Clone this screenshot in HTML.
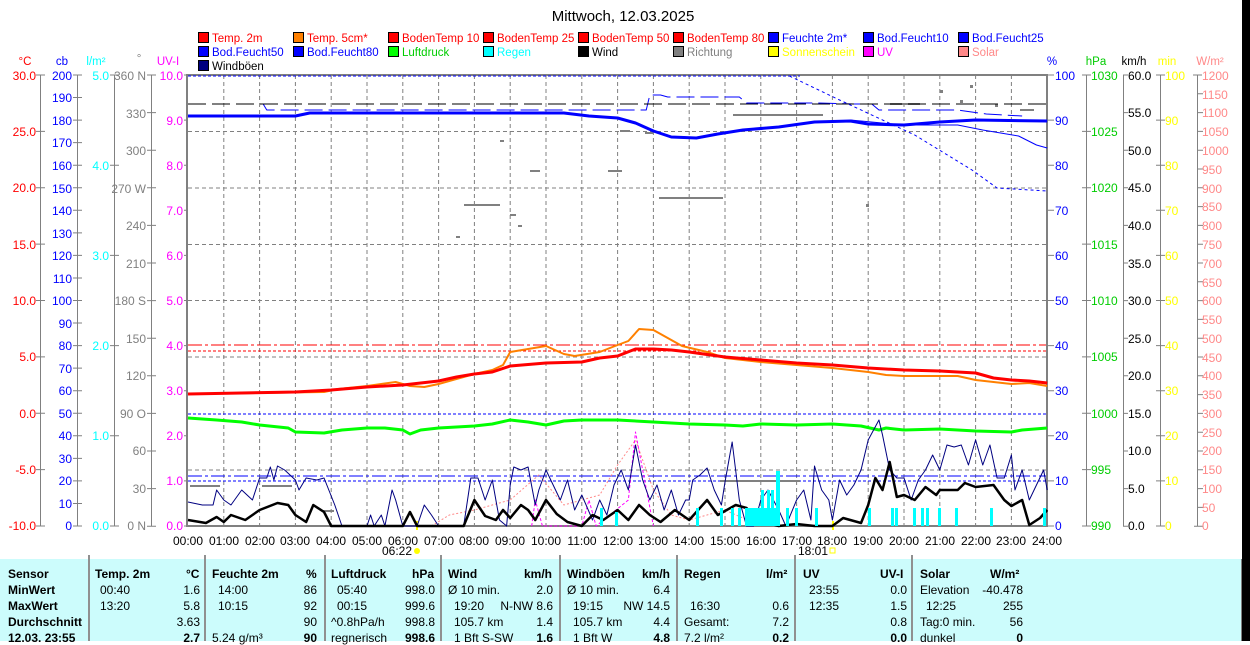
<!DOCTYPE html>
<html><head><meta charset="utf-8">
<style>
html,body{margin:0;padding:0;background:#fff;width:1250px;height:641px;overflow:hidden}
svg{display:block;font-family:"Liberation Sans",sans-serif}
.t{position:absolute;left:0;top:559px;width:1241px;height:82px;background:#ccfcfc}
.c{position:absolute;font:12px "Liberation Sans",sans-serif;color:#000;white-space:nowrap}
.b{font-weight:bold}
.r{text-align:right}
</style></head><body>
<div class="t"></div>
<svg width="1250" height="641" style="position:absolute;left:0;top:0">
<rect x="1242" y="0" width="8" height="641" fill="#000"/>
<rect x="1241" y="559" width="1" height="82" fill="#808080"/>
<text x="623" y="21" font-size="15" text-anchor="middle">Mittwoch, 12.03.2025</text>
<g font-size="11.5">
<rect x="198.5" y="32.5" width="10" height="10" fill="#f00" stroke="#000"/><text x="212" y="42" fill="#f00">Temp. 2m</text>
<rect x="293.5" y="32.5" width="10" height="10" fill="#ff8000" stroke="#000"/><text x="307" y="42" fill="#f00">Temp. 5cm*</text>
<rect x="388.5" y="32.5" width="10" height="10" fill="#f00" stroke="#000"/><text x="402" y="42" fill="#f00">BodenTemp 10</text>
<rect x="483.5" y="32.5" width="10" height="10" fill="#f00" stroke="#000"/><text x="497" y="42" fill="#f00">BodenTemp 25</text>
<rect x="578.5" y="32.5" width="10" height="10" fill="#f00" stroke="#000"/><text x="592" y="42" fill="#f00">BodenTemp 50</text>
<rect x="673.5" y="32.5" width="10" height="10" fill="#f00" stroke="#000"/><text x="687" y="42" fill="#f00">BodenTemp 80</text>
<rect x="768.5" y="32.5" width="10" height="10" fill="#00f" stroke="#000"/><text x="782" y="42" fill="#00f">Feuchte 2m*</text>
<rect x="863.5" y="32.5" width="10" height="10" fill="#00f" stroke="#000"/><text x="877" y="42" fill="#00f">Bod.Feucht10</text>
<rect x="958.5" y="32.5" width="10" height="10" fill="#00f" stroke="#000"/><text x="972" y="42" fill="#00f">Bod.Feucht25</text>
<rect x="198.5" y="46.5" width="10" height="10" fill="#00f" stroke="#000"/><text x="212" y="56" fill="#00f">Bod.Feucht50</text>
<rect x="293.5" y="46.5" width="10" height="10" fill="#00f" stroke="#000"/><text x="307" y="56" fill="#00f">Bod.Feucht80</text>
<rect x="388.5" y="46.5" width="10" height="10" fill="#0f0" stroke="#000"/><text x="402" y="56" fill="#0c0">Luftdruck</text>
<rect x="483.5" y="46.5" width="10" height="10" fill="#0ff" stroke="#000"/><text x="497" y="56" fill="#0ff">Regen</text>
<rect x="578.5" y="46.5" width="10" height="10" fill="#000" stroke="#000"/><text x="592" y="56" fill="#000">Wind</text>
<rect x="673.5" y="46.5" width="10" height="10" fill="#808080" stroke="#000"/><text x="687" y="56" fill="#808080">Richtung</text>
<rect x="768.5" y="46.5" width="10" height="10" fill="#ff0" stroke="#000"/><text x="782" y="56" fill="#ff0">Sonnenschein</text>
<rect x="863.5" y="46.5" width="10" height="10" fill="#f0f" stroke="#000"/><text x="877" y="56" fill="#f0f">UV</text>
<rect x="958.5" y="46.5" width="10" height="10" fill="#f88" stroke="#000"/><text x="972" y="56" fill="#f88">Solar</text>
<rect x="198.5" y="60.5" width="10" height="10" fill="#000080" stroke="#000"/><text x="212" y="70" fill="#000">Windböen</text>
</g>
<g font-size="11.5" text-anchor="middle">
<text x="25" y="65" fill="#f00">°C</text><text x="62" y="65" fill="#00f">cb</text><text x="96" y="65" fill="#0ff">l/m²</text><text x="139" y="62" fill="#808080">°</text><text x="168" y="65" fill="#f0f">UV-I</text>
<text x="1052" y="65" fill="#00f">%</text><text x="1096" y="65" fill="#0c0">hPa</text><text x="1134" y="65" fill="#000">km/h</text><text x="1167" y="65" fill="#ff0">min</text><text x="1210" y="65" fill="#f88">W/m²</text>
</g>
<g stroke="#808080" stroke-width="1">
<line x1="40.5" y1="75" x2="40.5" y2="526"/><line x1="77.5" y1="75" x2="77.5" y2="526"/><line x1="114.5" y1="75" x2="114.5" y2="526"/><line x1="151.5" y1="75" x2="151.5" y2="526"/>
<line x1="1086.5" y1="75" x2="1086.5" y2="526"/><line x1="1123.5" y1="75" x2="1123.5" y2="526"/><line x1="1160.5" y1="75" x2="1160.5" y2="526"/><line x1="1197.5" y1="75" x2="1197.5" y2="526"/>
</g>
<g stroke="#808080">
<path d="M36 75h9M36 131.4h9M36 187.8h9M36 244.1h9M36 300.5h9M36 356.9h9M36 413.3h9M36 469.6h9M36 526h9"/>
<path d="M73 75h9m-9 22.55h9m-9 22.55h9m-9 22.55h9m-9 22.55h9m-9 22.55h9m-9 22.55h9m-9 22.55h9m-9 22.55h9m-9 22.55h9m-9 22.55h9m-9 22.55h9m-9 22.55h9m-9 22.55h9m-9 22.55h9m-9 22.55h9m-9 22.55h9m-9 22.55h9m-9 22.55h9m-9 22.55h9m-9 22.55h9"/>
<path d="M110 75h9M110 165.2h9M110 255.4h9M110 345.6h9M110 435.8h9M110 526h9"/>
<path d="M147 75h9m-9 37.6h9m-9 37.6h9m-9 37.6h9m-9 37.6h9m-9 37.6h9m-9 37.6h9m-9 37.6h9m-9 37.6h9m-9 37.6h9m-9 37.6h9m-9 37.6h9m-9 37.6h9"/>
<path d="M184 75h4m-4 45.1h4m-4 45.1h4m-4 45.1h4m-4 45.1h4m-4 45.1h4m-4 45.1h4m-4 45.1h4m-4 45.1h4m-4 45.1h4m-4 45.1h4"/>
<path d="M1047 75h7m-7 45.1h7m-7 45.1h7m-7 45.1h7m-7 45.1h7m-7 45.1h7m-7 45.1h7m-7 45.1h7m-7 45.1h7m-7 45.1h7m-7 45.1h7"/>
<path d="M1082 75h9M1082 131.4h9M1082 187.8h9M1082 244.1h9M1082 300.5h9M1082 356.9h9M1082 413.3h9M1082 469.6h9M1082 526h9"/>
<path d="M1123 75h5m-5 37.6h5m-5 37.6h5m-5 37.6h5m-5 37.6h5m-5 37.6h5m-5 37.6h5m-5 37.6h5m-5 37.6h5m-5 37.6h5m-5 37.6h5m-5 37.6h5m-5 37.6h5"/>
<path d="M1156 75h9m-9 45.1h9m-9 45.1h9m-9 45.1h9m-9 45.1h9m-9 45.1h9m-9 45.1h9m-9 45.1h9m-9 45.1h9m-9 45.1h9m-9 45.1h9"/>
<path d="M1193 75h9m-4 18.8h5m-5 18.8h5m-5 18.8h5m-5 18.8h5m-5 18.8h5m-5 18.8h5m-5 18.8h5m-5 18.8h5m-5 18.8h5m-5 18.8h5m-5 18.8h5m-5 18.8h5m-5 18.8h5m-5 18.8h5m-5 18.8h5m-5 18.8h5m-5 18.8h5m-5 18.8h5m-5 18.8h5m-5 18.8h5m-5 18.8h5m-5 18.8h5m-5 18.8h5m-9 18.8h9"/>
</g>
<g font-size="12" text-anchor="end">
<g fill="#f00"><text x="36" y="80">30.0</text><text x="36" y="136">25.0</text><text x="36" y="192">20.0</text><text x="36" y="249">15.0</text><text x="36" y="305">10.0</text><text x="36" y="361">5.0</text><text x="36" y="418">0.0</text><text x="36" y="474">-5.0</text><text x="36" y="530">-10.0</text></g>
<g fill="#00f"><text x="72" y="80">200</text><text x="72" y="102">190</text><text x="72" y="125">180</text><text x="72" y="147">170</text><text x="72" y="170">160</text><text x="72" y="193">150</text><text x="72" y="215">140</text><text x="72" y="238">130</text><text x="72" y="260">120</text><text x="72" y="283">110</text><text x="72" y="305">100</text><text x="72" y="328">90</text><text x="72" y="350">80</text><text x="72" y="373">70</text><text x="72" y="395">60</text><text x="72" y="418">50</text><text x="72" y="440">40</text><text x="72" y="463">30</text><text x="72" y="485">20</text><text x="72" y="508">10</text><text x="72" y="530">0</text></g>
<g fill="#0ff"><text x="109" y="80">5.0</text><text x="109" y="170">4.0</text><text x="109" y="260">3.0</text><text x="109" y="350">2.0</text><text x="109" y="440">1.0</text><text x="109" y="530">0.0</text></g>
<g fill="#808080"><text x="146" y="80">360 N</text><text x="146" y="118">330</text><text x="146" y="155">300</text><text x="146" y="193">270 W</text><text x="146" y="230">240</text><text x="146" y="268">210</text><text x="146" y="305">180 S</text><text x="146" y="343">150</text><text x="146" y="380">120</text><text x="146" y="418">90 O</text><text x="146" y="455">60</text><text x="146" y="493">30</text><text x="146" y="530">0 N</text></g>
<g fill="#f0f"><text x="183" y="80">10.0</text><text x="183" y="125">9.0</text><text x="183" y="170">8.0</text><text x="183" y="215">7.0</text><text x="183" y="260">6.0</text><text x="183" y="305">5.0</text><text x="183" y="350">4.0</text><text x="183" y="395">3.0</text><text x="183" y="440">2.0</text><text x="183" y="485">1.0</text><text x="183" y="530">0.0</text></g>
</g>
<g font-size="12">
<g fill="#00f"><text x="1055" y="80">100</text><text x="1055" y="125">90</text><text x="1055" y="170">80</text><text x="1055" y="215">70</text><text x="1055" y="260">60</text><text x="1055" y="305">50</text><text x="1055" y="350">40</text><text x="1055" y="395">30</text><text x="1055" y="440">20</text><text x="1055" y="485">10</text><text x="1055" y="530">0</text></g>
<g fill="#0c0"><text x="1091" y="80">1030</text><text x="1091" y="136">1025</text><text x="1091" y="192">1020</text><text x="1091" y="249">1015</text><text x="1091" y="305">1010</text><text x="1091" y="361">1005</text><text x="1091" y="418">1000</text><text x="1091" y="474">995</text><text x="1091" y="530">990</text></g>
<g fill="#000"><text x="1128" y="80">60.0</text><text x="1128" y="117">55.0</text><text x="1128" y="155">50.0</text><text x="1128" y="192">45.0</text><text x="1128" y="230">40.0</text><text x="1128" y="268">35.0</text><text x="1128" y="305">30.0</text><text x="1128" y="343">25.0</text><text x="1128" y="380">20.0</text><text x="1128" y="418">15.0</text><text x="1128" y="455">10.0</text><text x="1128" y="493">5.0</text><text x="1128" y="530">0.0</text></g>
<g fill="#ff0"><text x="1165" y="80">100</text><text x="1165" y="125">90</text><text x="1165" y="170">80</text><text x="1165" y="215">70</text><text x="1165" y="260">60</text><text x="1165" y="305">50</text><text x="1165" y="350">40</text><text x="1165" y="395">30</text><text x="1165" y="440">20</text><text x="1165" y="485">10</text><text x="1165" y="530">0</text></g>
<g fill="#f88"><text x="1202" y="80">1200</text><text x="1202" y="99">1150</text><text x="1202" y="117">1100</text><text x="1202" y="136">1050</text><text x="1202" y="155">1000</text><text x="1202" y="174">950</text><text x="1202" y="193">900</text><text x="1202" y="211">850</text><text x="1202" y="230">800</text><text x="1202" y="249">750</text><text x="1202" y="268">700</text><text x="1202" y="287">650</text><text x="1202" y="305">600</text><text x="1202" y="324">550</text><text x="1202" y="343">500</text><text x="1202" y="362">450</text><text x="1202" y="380">400</text><text x="1202" y="399">350</text><text x="1202" y="418">300</text><text x="1202" y="437">250</text><text x="1202" y="455">200</text><text x="1202" y="474">150</text><text x="1202" y="493">100</text><text x="1202" y="512">50</text><text x="1202" y="530">0</text></g>
</g>
<g stroke="#808080" stroke-dasharray="4,3" stroke-width="1">
<path d="M223.8 75V526M259.6 75V526M295.4 75V526M331.2 75V526M367 75V526M402.8 75V526M438.6 75V526M474.4 75V526M510.2 75V526M546 75V526M581.8 75V526M617.6 75V526M653.4 75V526M689.2 75V526M725 75V526M760.8 75V526M796.6 75V526M832.4 75V526M868.2 75V526M904 75V526M939.8 75V526M975.6 75V526M1011.4 75V526"/>
<path d="M188 131.5H1046M188 188H1046M188 244.5H1046M188 300.5H1046M188 357H1046M188 470H1046"/>
</g>
<rect x="187" y="75" width="860" height="451" fill="none" stroke="#808080" stroke-width="2"/>
<g font-size="12" text-anchor="middle">
<text x="188" y="545">00:00</text><text x="224" y="545">01:00</text><text x="260" y="545">02:00</text><text x="295" y="545">03:00</text><text x="331" y="545">04:00</text><text x="367" y="545">05:00</text><text x="403" y="545">06:00</text><text x="439" y="545">07:00</text><text x="474" y="545">08:00</text><text x="510" y="545">09:00</text><text x="546" y="545">10:00</text><text x="582" y="545">11:00</text><text x="618" y="545">12:00</text><text x="653" y="545">13:00</text><text x="689" y="545">14:00</text><text x="725" y="545">15:00</text><text x="761" y="545">16:00</text><text x="797" y="545">17:00</text><text x="832" y="545">18:00</text><text x="868" y="545">19:00</text><text x="904" y="545">20:00</text><text x="940" y="545">21:00</text><text x="976" y="545">22:00</text><text x="1011" y="545">23:00</text><text x="1047" y="545">24:00</text>
<text x="397" y="555">06:22</text><text x="813" y="555">18:01</text>
</g>
<circle cx="417" cy="551" r="3" fill="#ff0"/><rect x="830" y="548" width="5" height="5" fill="none" stroke="#ff0"/>
<rect x="416" y="521" width="2" height="9" fill="#ff0"/><rect x="832" y="521" width="2" height="9" fill="#ff0"/>
<path d="M188 76H800" stroke="#00f" stroke-dasharray="3,2"/>
<path d="M188 414H1046" stroke="#00f" stroke-dasharray="3,2"/>
<path d="M188 476H1046" stroke="#00f" stroke-dasharray="14,3,3,3"/>
<path d="M188 481H1046" stroke="#00f" stroke-dasharray="3,2"/>
<path d="M188 345H1046" stroke="#f00" stroke-dasharray="14,3,3,3"/>
<path d="M188 351H1046" stroke="#f00" stroke-dasharray="3,2"/>
<path d="M188 357H1046" stroke="#808080" stroke-dasharray="4,3"/>
<g fill="#808080">
<rect x="190" y="485" width="30" height="2"/><rect x="262" y="485" width="30" height="2"/><rect x="322" y="510" width="12" height="2"/>
<rect x="464" y="204" width="36" height="2"/><rect x="456" y="236" width="4" height="2"/><rect x="530" y="170" width="10" height="2"/>
<rect x="608" y="170" width="14" height="2"/><rect x="659" y="197" width="64" height="2"/><rect x="733" y="114" width="90" height="2"/>
<rect x="510" y="214" width="6" height="2"/><rect x="518" y="225" width="4" height="2"/><rect x="500" y="140" width="4" height="2"/>
<rect x="890" y="103" width="30" height="2"/><rect x="1020" y="109" width="14" height="2"/><rect x="866" y="204" width="3" height="3"/>
<rect x="940" y="90" width="3" height="3"/><rect x="960" y="100" width="3" height="3"/><rect x="995" y="104" width="3" height="3"/><rect x="970" y="85" width="3" height="3"/>
<rect x="720" y="480" width="80" height="2"/><rect x="620" y="130" width="10" height="2"/><rect x="645" y="132" width="8" height="2"/>
</g>
<g transform="translate(188,0) scale(35.8,1)" fill="none" stroke-linejoin="round">
<polyline vector-effect="non-scaling-stroke" stroke="#00f" stroke-width="1" stroke-dasharray="18,6" points="0,104 2.1,104 2.2,110 12.8,110 12.9,95 13.2,95 13.4,97 15.4,97 15.6,103 17.6,103 18.6,104 19.1,104 19.3,110 21.5,110 22.3,114 23.3,116"/>
<polyline vector-effect="non-scaling-stroke" stroke="#000" stroke-width="1" stroke-dasharray="18,6" points="0,104 24,104"/>
<polyline vector-effect="non-scaling-stroke" stroke="#00f" stroke-width="1" stroke-dasharray="3,3" points="16.8,76 18.2,100 20.3,135 21.9,170 22.6,188 24,191"/>
<polyline vector-effect="non-scaling-stroke" stroke="#00f" stroke-width="1" points="18.5,120 20,125 21.5,125 22.2,130 23.2,136 23.7,145 24,148"/>
<polyline vector-effect="non-scaling-stroke" stroke="#00f" stroke-width="3" points="0,116 3,116 3.4,113 10.5,113 11.2,116 12,118 12.5,123 13,131 13.5,137 14.2,138 14.8,134 15.5,130 16.5,127 17.5,122 18.5,121 19,124 20,125 21,122 22,120 24,121"/>
<polyline vector-effect="non-scaling-stroke" stroke="#0f0" stroke-width="3" points="0,418 0.8,420 1.5,422 2,425 2.8,428 3,432 3.8,433 4.3,430 5,428 5.5,428 6,430 6.2,434 6.5,430 7,428 8,426 8.5,424 9,420 9.5,422 10,425 10.5,421 11,420 12,420 13,422 14,424 15,425 15.5,426 16,424 17,425 18,424 18.8,426 19.3,430 19.5,428 20,430 21,429 22,431 23,432 23.3,430 24,428"/>
<polyline vector-effect="non-scaling-stroke" stroke="#ff8000" stroke-width="2" points="0,394 3.8,392 4.2,389 5,386 5.8,382 6.2,386 6.6,387 7,384 8,374 8.5,370 8.8,365 9,352 9.5,349 10,346 10.5,354 10.8,356 11.5,352 12,345 12.3,341 12.6,329 13,330 13.5,340 13.8,346 14.5,352 15,358 15.5,360 16,362 17,365 18,368 18.5,370 19,372 19.5,375 20,376 21,376 21.5,376 22,380 22.5,382 23,384 23.5,383 24,386"/>
<polyline vector-effect="non-scaling-stroke" stroke="#f00" stroke-width="3" points="0,394 3,392 4,390 5,387 6,385 7,381 7.5,377 8,374 8.5,372 9,366 10,363 11,362 11.5,358 12,356 12.5,349 13,349 13.5,350 14,352 15,357 16,360 17,363 18,365 19,368 20,370 21,371 22,373 22.5,378 23,380 23.5,381 24,383"/>
<polyline vector-effect="non-scaling-stroke" stroke="#f88" stroke-width="1" stroke-dasharray="2,2" points="6.8,526 7.3,515 8,510 9,500 9.8,475 10.5,505 11.5,495 12,465 12.5,440 13,490 13.5,515 14,520 15,510 16,526"/>
<polyline vector-effect="non-scaling-stroke" stroke="#f0f" stroke-width="1" stroke-dasharray="3,2" points="9.6,526 9.7,500 9.9,526 11,526 11.2,500 11.4,526 12.3,500 12.5,432 12.7,470 13,526"/>
<polyline vector-effect="non-scaling-stroke" stroke="#000080" stroke-width="1" points="0,502 0.4,505 0.7,505 0.8,490 1,500 1.2,505 1.5,490 1.8,500 2,478 2.2,478 2.3,467 2.4,480 2.5,466 2.7,470 3,480 3.1,490 3.3,478 3.6,480 3.8,478 4.1,505 4.3,526 5,526 5.1,515 5.2,526 5.4,515 5.5,526 5.7,490 5.8,500 6,526 6.4,526 6.6,505 6.8,515 7,526 7.7,526 7.9,478 8.1,478 8.3,500 8.5,480 8.7,520 8.9,526 9,485 9.1,467 9.3,470 9.5,467 9.7,505 9.8,490 10,470 10.2,485 10.4,500 10.6,480 10.8,510 11,495 11.3,520 11.5,500 11.7,515 11.9,485 12.1,470 12.3,490 12.5,445 12.7,480 12.9,500 13.1,485 13.3,510 13.5,490 13.7,515 13.9,500 14,500 14.1,480 14.3,475 14.5,468 14.7,490 14.9,505 15,482 15.2,442 15.4,500 15.6,526 15.8,526 16,500 16.2,490 16.5,510 16.7,526 17,500 17.2,490 17.4,520 17.5,466 17.7,490 17.9,500 18,520 18.2,480 18.4,495 18.6,485 18.8,470 19,440 19.3,420 19.4,435 19.6,470 19.8,478 20,478 20.2,500 20.4,480 20.6,470 20.8,455 21,470 21.2,445 21.4,447 21.6,445 21.8,465 22,440 22.2,465 22.4,445 22.6,478 22.8,478 23,455 23.1,490 23.3,470 23.5,500 23.7,485 23.9,470 24,490"/>
<polyline vector-effect="non-scaling-stroke" stroke="#000" stroke-width="2.5" points="0,520 0.5,523 0.8,517 1,522 1.2,515 1.6,520 2,510 2.5,503 2.8,505 3,515 3.3,522 3.5,505 3.8,512 4,526 6,526 6.2,512 6.4,526 7.7,526 8,500 8.3,516 8.6,520 8.8,510 9,518 9.3,505 9.5,510 9.7,520 10,500 10.3,514 10.6,522 11,526 11.3,515 11.6,520 12,510 12.3,520 12.6,505 12.9,515 13.2,522 13.6,510 14,520 14.5,500 14.8,515 15.3,505 15.6,508 15.9,520 16.5,526 17,524 17.5,526 18,526 18.3,518 18.8,523 19,505 19.2,478 19.4,490 19.6,462 19.8,497 20,495 20.3,500 20.6,487 20.9,495 21,490 21.5,490 21.7,483 22,487 22.5,485 22.8,500 23,506 23.3,500 23.5,525 23.8,518 24,510"/>
</g>
<g fill="#0ff">
<rect x="696" y="508" width="3" height="18"/><rect x="720" y="508" width="3" height="18"/><rect x="731" y="508" width="3" height="18"/><rect x="738" y="508" width="3" height="18"/>
<rect x="745" y="508" width="35" height="18"/><rect x="761" y="490" width="3" height="36"/><rect x="767" y="490" width="3" height="36"/><rect x="771" y="490" width="3" height="36"/><rect x="776" y="471" width="4" height="55"/>
<rect x="786" y="508" width="3" height="18"/><rect x="795" y="508" width="3" height="18"/><rect x="815" y="508" width="3" height="18"/>
<rect x="868" y="508" width="3" height="18"/><rect x="891" y="508" width="3" height="18"/><rect x="895" y="508" width="3" height="18"/><rect x="913" y="508" width="3" height="18"/><rect x="921" y="508" width="3" height="18"/><rect x="926" y="508" width="3" height="18"/><rect x="938" y="508" width="3" height="18"/><rect x="955" y="508" width="3" height="18"/><rect x="990" y="508" width="3" height="18"/><rect x="1043" y="508" width="3" height="18"/>
<rect x="600" y="508" width="3" height="18"/><rect x="615" y="512" width="3" height="14"/>
</g>
<g stroke="#909090" stroke-width="2">
<path d="M89 555V641M205 555V641M325 555V641M441 555V641M560 555V641M677 555V641M795 555V641M912 555V641"/>
</g>
</svg>
<div class="c b" style="left:8px;top:567px">Sensor</div>
<div class="c b" style="left:8px;top:583px">MinWert</div>
<div class="c b" style="left:8px;top:599px">MaxWert</div>
<div class="c b" style="left:8px;top:615px">Durchschnitt</div>
<div class="c b" style="left:8px;top:631px">12.03. 23:55</div>

<div class="c b" style="left:95px;top:567px">Temp. 2m</div><div class="c b" style="left:186px;top:567px">°C</div>
<div class="c" style="left:100px;top:583px">00:40</div><div class="c r" style="right:1050px;top:583px">1.6</div>
<div class="c" style="left:100px;top:599px">13:20</div><div class="c r" style="right:1050px;top:599px">5.8</div>
<div class="c r" style="right:1050px;top:615px">3.63</div>
<div class="c b r" style="right:1050px;top:631px">2.7</div>

<div class="c b" style="left:212px;top:567px">Feuchte 2m</div><div class="c b" style="left:306px;top:567px">%</div>
<div class="c" style="left:218px;top:583px">14:00</div><div class="c r" style="right:933px;top:583px">86</div>
<div class="c" style="left:218px;top:599px">10:15</div><div class="c r" style="right:933px;top:599px">92</div>
<div class="c r" style="right:933px;top:615px">90</div>
<div class="c" style="left:212px;top:631px">5.24 g/m³</div><div class="c b r" style="right:933px;top:631px">90</div>

<div class="c b" style="left:331px;top:567px">Luftdruck</div><div class="c b" style="left:412px;top:567px">hPa</div>
<div class="c" style="left:337px;top:583px">05:40</div><div class="c r" style="right:815px;top:583px">998.0</div>
<div class="c" style="left:337px;top:599px">00:15</div><div class="c r" style="right:815px;top:599px">999.6</div>
<div class="c" style="left:331px;top:615px">^0.8hPa/h</div><div class="c r" style="right:815px;top:615px">998.8</div>
<div class="c" style="left:331px;top:631px">regnerisch</div><div class="c b r" style="right:815px;top:631px">998.6</div>

<div class="c b" style="left:448px;top:567px">Wind</div><div class="c b" style="left:524px;top:567px">km/h</div>
<div class="c" style="left:448px;top:583px">Ø 10 min.</div><div class="c r" style="right:697px;top:583px">2.0</div>
<div class="c" style="left:454px;top:599px">19:20</div><div class="c r" style="right:697px;top:599px">N-NW 8.6</div>
<div class="c" style="left:454px;top:615px">105.7 km</div><div class="c r" style="right:697px;top:615px">1.4</div>
<div class="c" style="left:454px;top:631px">1 Bft S-SW</div><div class="c b r" style="right:697px;top:631px">1.6</div>

<div class="c b" style="left:567px;top:567px">Windböen</div><div class="c b" style="left:642px;top:567px">km/h</div>
<div class="c" style="left:567px;top:583px">Ø 10 min.</div><div class="c r" style="right:580px;top:583px">6.4</div>
<div class="c" style="left:573px;top:599px">19:15</div><div class="c r" style="right:580px;top:599px">NW 14.5</div>
<div class="c" style="left:573px;top:615px">105.7 km</div><div class="c r" style="right:580px;top:615px">4.4</div>
<div class="c" style="left:573px;top:631px">1 Bft W</div><div class="c b r" style="right:580px;top:631px">4.8</div>

<div class="c b" style="left:684px;top:567px">Regen</div><div class="c b" style="left:766px;top:567px">l/m²</div>
<div class="c" style="left:690px;top:599px">16:30</div><div class="c r" style="right:461px;top:599px">0.6</div>
<div class="c" style="left:684px;top:615px">Gesamt:</div><div class="c r" style="right:461px;top:615px">7.2</div>
<div class="c" style="left:684px;top:631px">7.2 l/m²</div><div class="c b r" style="right:461px;top:631px">0.2</div>

<div class="c b" style="left:803px;top:567px">UV</div><div class="c b" style="left:880px;top:567px">UV-I</div>
<div class="c" style="left:809px;top:583px">23:55</div><div class="c r" style="right:343px;top:583px">0.0</div>
<div class="c" style="left:809px;top:599px">12:35</div><div class="c r" style="right:343px;top:599px">1.5</div>
<div class="c r" style="right:343px;top:615px">0.8</div>
<div class="c b r" style="right:343px;top:631px">0.0</div>

<div class="c b" style="left:920px;top:567px">Solar</div><div class="c b" style="left:990px;top:567px">W/m²</div>
<div class="c" style="left:920px;top:583px">Elevation</div><div class="c r" style="right:227px;top:583px">-40.478</div>
<div class="c" style="left:926px;top:599px">12:25</div><div class="c r" style="right:227px;top:599px">255</div>
<div class="c" style="left:920px;top:615px">Tag:0 min.</div><div class="c r" style="right:227px;top:615px">56</div>
<div class="c" style="left:920px;top:631px">dunkel</div><div class="c b r" style="right:227px;top:631px">0</div>
</body></html>
